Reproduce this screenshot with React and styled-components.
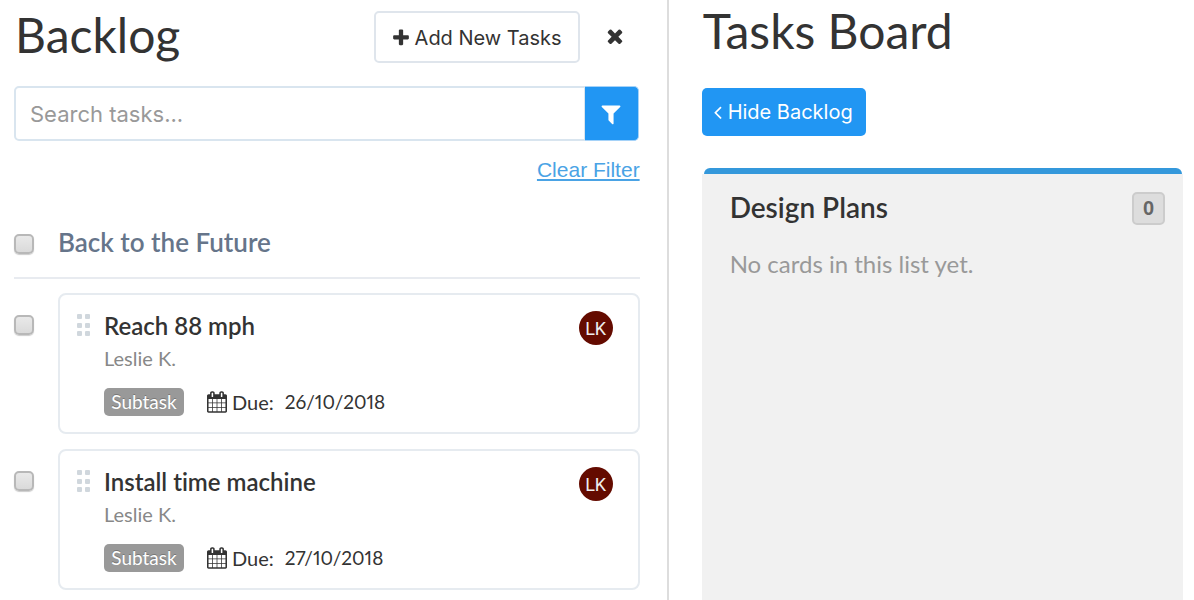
import React from "react";
import styled, { createGlobalStyle } from "styled-components";

const rounded = `Lato, "Open Sans", sans-serif`;
const system = `Inter, Roboto, sans-serif`;

const GlobalStyle = createGlobalStyle`
  *, *::before, *::after { box-sizing: border-box; }
  body {
    margin: 0;
    background: #fff;
    color: #333;
    font-family: ${rounded};
    font-size: 20px;
    font-variant-ligatures: none;
  }
  h1, h2, h3, p, ul { margin: 0; padding: 0; }
  button, input { font-family: ${system}; margin: 0; }
`;

const paths = {
  plus: "M1600 736v192q0 40-28 68t-68 28h-416v416q0 40-28 68t-68 28h-192q-40 0-68-28t-28-68v-416h-416q-40 0-68-28t-28-68v-192q0-40 28-68t68-28h416v-416q0-40 28-68t68-28h192q40 0 68 28t28 68v416h416q40 0 68 28t28 68z",
  times: "M1490 1322q0 40-28 68l-136 136q-28 28-68 28t-68-28l-294-294-294 294q-28 28-68 28t-68-28l-136-136q-28-28-28-68t28-68l294-294-294-294q-28-28-28-68t28-68l136-136q28-28 68-28t68 28l294 294 294-294q28-28 68-28t68 28l136 136q28 28 28 68t-28 68l-294 294 294 294q28 28 28 68z",
  filter: "M1595 295q17 41-14 70l-493 493v742q0 42-39 59-13 5-25 5-27 0-45-19l-256-256q-19-19-19-45v-486l-493-493q-31-29-14-70 17-39 59-39h1280q42 0 59 39z",
  angleLeft: "M1203 544q0 13-10 23l-393 393 393 393q10 10 10 23t-10 23l-50 50q-10 10-23 10t-23-10l-466-466q-10-10-10-23t10-23l466-466q10-10 23-10t23 10l50 50q10 10 10 23z",
  calendar: "M192 1664h288v-288h-288v288zm352 0h320v-288h-320v288zm-352-352h288v-320h-288v320zm352 0h320v-320h-320v320zm-352-384h288v-288h-288v288zm736 736h320v-288h-320v288zm-384-736h320v-288h-320v288zm768 736h288v-288h-288v288zm-384-352h320v-320h-320v320zm-352-864v-288q0-13-9.5-22.5t-22.5-9.5h-64q-13 0-22.5 9.5t-9.5 22.5v288q0 13 9.5 22.5t22.5 9.5h64q13 0 22.5-9.5t9.5-22.5zm736 864h288v-320h-288v320zm-384-384h320v-288h-320v288zm384 0h288v-288h-288v288zm32-480v-288q0-13-9.5-22.5t-22.5-9.5h-64q-13 0-22.5 9.5t-9.5 22.5v288q0 13 9.5 22.5t22.5 9.5h64q13 0 22.5-9.5t9.5-22.5zm384-64v1280q0 52-38 90t-90 38h-1408q-52 0-90-38t-38-90v-1280q0-52 38-90t90-38h128v-96q0-66 47-113t113-47h64q66 0 113 47t47 113v96h384v-96q0-66 47-113t113-47h64q66 0 113 47t47 113v96h128q52 0 90 38t38 90z",
};

const Svg = styled.svg`
  display: block;
  flex: none;
  fill: currentColor;
`;

function Icon({ name, size, crop = "0 0 1792 1792", width = size }) {
  return (
    <Svg viewBox={crop} width={width} height={size} aria-hidden="true">
      <path d={paths[name]} />
    </Svg>
  );
}

const Page = styled.div`
  display: flex;
  min-height: 100vh;
`;

const BacklogPanel = styled.section`
  flex: 0 0 56%;
  padding: 11px 27px 11px 14px;
  border-right: 2px solid #ddd;
`;

const BoardPanel = styled.main`
  flex: 1;
  min-width: 0;
  display: flex;
  flex-direction: column;
  align-items: flex-start;
  padding: 7px 11px 0 33px;
`;

const Header = styled.header`
  display: flex;
  align-items: flex-start;
`;

const Title = styled.h1`
  padding-left: 1px;
  font-size: 48px;
  line-height: 48px;
  font-weight: 400;
`;

const OutlineButton = styled.button`
  display: flex;
  align-items: center;
  gap: 4px;
  height: 52px;
  margin-left: auto;
  padding: 2px 16px 0 15px;
  border: 2px solid #dfe5ec;
  border-radius: 5px;
  background: #fff;
  color: #333;
  font-size: 20px;
`;

const CloseButton = styled.button`
  display: flex;
  margin: 14px 14px 0 24px;
  padding: 0;
  border: 0;
  background: none;
  color: #333;
`;

const SearchBar = styled.form`
  display: flex;
  height: 55px;
  margin-top: 23px;
  padding-right: 1px;
`;

const SearchInput = styled.input`
  flex: 1;
  min-width: 0;
  padding: 0 14px;
  border: 2px solid #d9e5ef;
  border-right-width: 1px;
  border-radius: 5px 0 0 5px;
  background: #fff;
  color: #333;
  font-size: 22px;
  &::placeholder { color: #999; opacity: 1; }
`;

const FilterButton = styled.button`
  display: flex;
  align-items: center;
  justify-content: center;
  width: 54px;
  padding: 0;
  border: 1px solid #a5d2f8;
  border-left: 0;
  border-radius: 0 5px 5px 0;
  background: #2196f3;
  color: #fff;
`;

const FilterActions = styled.div`
  display: flex;
  justify-content: flex-end;
  margin-top: 16px;
`;

const ClearLink = styled.a`
  color: #4aa3e5;
  font-family: "Liberation Sans", Arial, sans-serif;
  font-size: 21px;
  line-height: 26px;
  text-underline-offset: 2px;
`;

const Checkbox = styled.input`
  appearance: none;
  flex: none;
  width: 20px;
  height: 20px;
  border: 2px solid #b8b8b8;
  border-radius: 5px;
  background: linear-gradient(#e9e9e9, #dadada);
  box-shadow: 0 1px 1px #ccc;
`;

const GroupHeader = styled.label`
  display: flex;
  align-items: center;
  gap: 24px;
  height: 68px;
  margin-top: 28px;
  margin-bottom: 14px;
  border-bottom: 2px solid #e8ebf0;
`;

const GroupName = styled.h2`
  padding-bottom: 4px;
  color: #66758a;
  font-size: 26px;
  line-height: 32px;
  font-weight: 600;
`;

const TaskList = styled.ul`
  display: flex;
  flex-direction: column;
  gap: 15px;
  list-style: none;
`;

const TaskRow = styled.li`
  display: flex;
  gap: 24px;
  align-items: flex-start;
  & > input { margin-top: 22px; }
`;

const Card = styled.article`
  flex: 1;
  display: flex;
  align-items: flex-start;
  padding: 16px 25px 16px 17px;
  border: 2px solid #e6ebf0;
  border-radius: 8px;
`;

const DragHandle = styled.svg`
  flex: none;
  width: 14px;
  height: 24px;
  margin: 3px 13px 0 0;
  fill: #d0d7dd;
`;

const CardBody = styled.div`
  flex: 1;
  min-width: 0;
`;

const TaskName = styled.h3`
  font-size: 24px;
  line-height: 29px;
  font-weight: 600;
`;

const Assignee = styled.p`
  color: #888;
  font-size: 20px;
  line-height: 36px;
`;

const Meta = styled.div`
  display: flex;
  align-items: center;
  margin-top: 12px;
  font-size: 20px;
  line-height: 24px;
`;

const Tag = styled.span`
  display: flex;
  align-items: center;
  justify-content: center;
  width: 80px;
  height: 28px;
  margin-right: 23px;
  border-radius: 5px;
  background: #999;
  color: #fff;
  font-size: 19px;
  text-shadow: 0 -1px 0 #777;
`;

const DueLabel = styled.span`
  margin: 0 11px 0 5px;
`;

const DueDate = styled.time`
  font-size: 19px;
  font-variant-numeric: proportional-nums;
`;

const Avatar = styled.span`
  display: flex;
  align-items: center;
  justify-content: center;
  width: 34px;
  height: 34px;
  border-radius: 50%;
  background: #640b00;
  color: #eee;
  font-family: Roboto, sans-serif;
  font-size: 18px;
`;

const PrimaryButton = styled.button`
  display: flex;
  align-items: center;
  gap: 6px;
  height: 48px;
  margin-top: 33px;
  padding: 0 13px 0 12px;
  border: 0;
  border-radius: 5px;
  background: #2196f3;
  color: #fff;
  font-size: 20px;
`;

const Column = styled.section`
  flex: 1;
  align-self: stretch;
  margin-top: 32px;
  background: linear-gradient(#fff 0 6px, #f1f1f1 6px);
`;

const ColumnAccent = styled.div`
  height: 6px;
  margin: 0 1px 0 2px;
  border-radius: 6px 6px 0 0;
  background: #3498db;
`;

const ColumnHeader = styled.div`
  display: flex;
  align-items: flex-start;
  justify-content: space-between;
  padding: 18px 18px 0 28px;
`;

const ColumnName = styled.h2`
  font-size: 28px;
  line-height: 30px;
  font-weight: 600;
`;

const Count = styled.span`
  width: 33px;
  height: 33px;
  border: 2px solid #ccc;
  border-radius: 5px;
  background: #ddd;
  color: #666;
  font-family: "Liberation Sans", Arial, sans-serif;
  font-size: 20px;
  line-height: 29px;
  font-weight: 700;
  text-align: center;
`;

const EmptyMessage = styled.p`
  padding: 22px 28px;
  color: #999;
  font-size: 24px;
  line-height: 34px;
`;

const tasks = [
  { name: "Reach 88 mph", assignee: "Leslie K.", initials: "LK", due: "26/10/2018" },
  { name: "Install time machine", assignee: "Leslie K.", initials: "LK", due: "27/10/2018" },
];

function Handle() {
  return (
    <DragHandle viewBox="0 0 14 24" aria-hidden="true">
      {[0, 9, 17].map((y) =>
        [0, 8].map((x) => <rect key={`${x}-${y}`} x={x} y={y} width="5" height="5" rx="1" />)
      )}
    </DragHandle>
  );
}

function Task({ task }) {
  return (
    <TaskRow>
      <Checkbox type="checkbox" aria-label={task.name} />
      <Card>
        <Handle />
        <CardBody>
          <TaskName>{task.name}</TaskName>
          <Assignee>{task.assignee}</Assignee>
          <Meta>
            <Tag>Subtask</Tag>
            <Icon name="calendar" size={22} width={20} crop="64 0 1664 1792" />
            <DueLabel>Due:</DueLabel>
            <DueDate>{task.due}</DueDate>
          </Meta>
        </CardBody>
        <Avatar>{task.initials}</Avatar>
      </Card>
    </TaskRow>
  );
}

export default function App() {
  return (
    <>
      <GlobalStyle />
      <Page>
        <BacklogPanel>
          <Header>
            <Title>Backlog</Title>
            <OutlineButton type="button">
              <Icon name="plus" size={20} />
              Add New Tasks
            </OutlineButton>
            <CloseButton type="button" aria-label="Close">
              <Icon name="times" size={22} />
            </CloseButton>
          </Header>
          <SearchBar onSubmit={(e) => e.preventDefault()}>
            <SearchInput type="text" placeholder="Search tasks..." aria-label="Search tasks" />
            <FilterButton type="submit" aria-label="Filter">
              <Icon name="filter" size={24} />
            </FilterButton>
          </SearchBar>
          <FilterActions>
            <ClearLink href="#">Clear Filter</ClearLink>
          </FilterActions>
          <GroupHeader>
            <Checkbox type="checkbox" />
            <GroupName>Back to the Future</GroupName>
          </GroupHeader>
          <TaskList>
            {tasks.map((task) => <Task key={task.name} task={task} />)}
          </TaskList>
        </BacklogPanel>
        <BoardPanel>
          <Title>Tasks Board</Title>
          <PrimaryButton type="button">
            <Icon name="angleLeft" size={22} width={8} crop="600 0 640 1792" />
            Hide Backlog
          </PrimaryButton>
          <Column>
            <ColumnAccent />
            <ColumnHeader>
              <ColumnName>Design Plans</ColumnName>
              <Count>0</Count>
            </ColumnHeader>
            <EmptyMessage>No cards in this list yet.</EmptyMessage>
          </Column>
        </BoardPanel>
      </Page>
    </>
  );
}
